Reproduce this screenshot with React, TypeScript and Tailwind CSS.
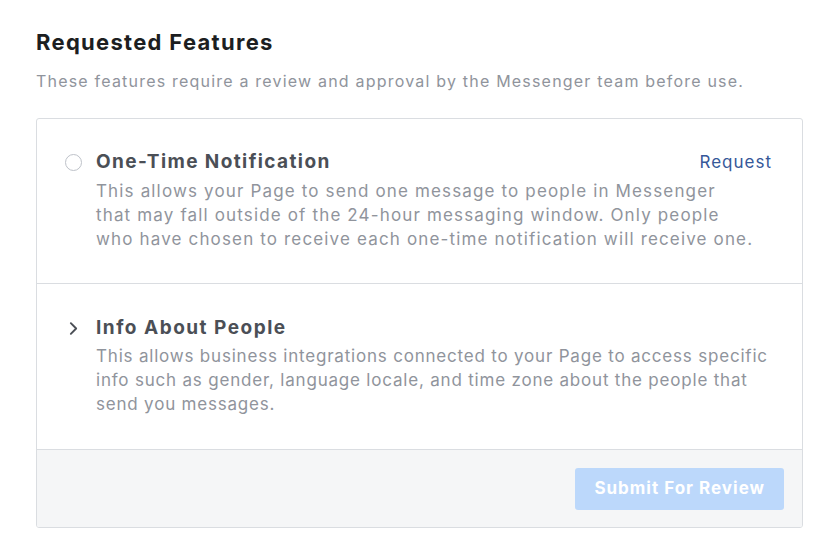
import React from 'react';

const font = { fontFamily: 'Inter, "Noto Sans", sans-serif' };

function Radio() {
  return <span className="mt-[4px] h-[17px] w-[17px] shrink-0 rounded-full border-[1.5px] border-[#bec2c9] bg-white" />;
}

function Chevron() {
  return (
    <svg width="17" height="17" viewBox="0 0 16 16" className="mt-[4px] shrink-0" fill="none">
      <path d="M5.5 3 L10.5 8 L5.5 13" stroke="#4b4f56" strokeWidth="1.8" strokeLinecap="round" strokeLinejoin="round" />
    </svg>
  );
}

export default function App() {
  return (
    <div className="min-h-screen bg-white px-[36px] pt-[28px]" style={font}>
      <h1 className="text-[22px] font-bold leading-[28px] tracking-[1.3px] text-[#1c1e21]">Requested Features</h1>
      <p className="mt-[13px] text-[16px] leading-[24px] tracking-[1.2px] text-[#90949c]">
        These features require a review and approval by the Messenger team before use.
      </p>

      <div className="mt-[25px] w-[767px] overflow-hidden rounded-[3px] border border-[#dadde1]">
        {/* One-Time Notification */}
        <div className="flex gap-[14px] border-b border-[#dadde1] pl-[28px] pr-[30px] pt-[31px] pb-[32px]">
          <Radio />
          <div className="flex-1">
            <div className="flex items-start justify-between">
              <h2 className="text-[19px] font-bold leading-[24px] tracking-[1.4px] text-[#4b4f56]">One-Time Notification</h2>
              <a className="text-[17px] leading-[24px] tracking-[1px] text-[#365899]">Request</a>
            </div>
            <p className="mt-[5px] whitespace-nowrap text-[17px] leading-[24px] tracking-[1.15px] text-[#90949c]">
              This allows your Page to send one message to people in Messenger
              <br />
              that may fall outside of the 24-hour messaging window. Only people
              <br />
              who have chosen to receive each one-time notification will receive one.
            </p>
          </div>
        </div>

        {/* Info About People */}
        <div className="flex gap-[14px] border-b border-[#dadde1] pl-[28px] pr-[20px] pt-[32px] pb-[33px]">
          <Chevron />
          <div className="flex-1">
            <h2 className="text-[19px] font-bold leading-[24px] tracking-[1.5px] text-[#4b4f56]">Info About People</h2>
            <p className="mt-[4px] whitespace-nowrap text-[17px] leading-[24px] tracking-[0.8px] text-[#90949c]">
              This allows business integrations connected to your Page to access specific
              <br />
              info such as gender, language locale, and time zone about the people that
              <br />
              send you messages.
            </p>
          </div>
        </div>

        {/* Footer */}
        <div className="flex justify-end bg-[#f5f6f7] px-[18px] pt-[18px] pb-[17px]">
          <button className="h-[42px] rounded-[3px] bg-[#bcd8fb] px-[19px] text-[17px] font-bold tracking-[1px] text-white">
            Submit For Review
          </button>
        </div>
      </div>
    </div>
  );
}
